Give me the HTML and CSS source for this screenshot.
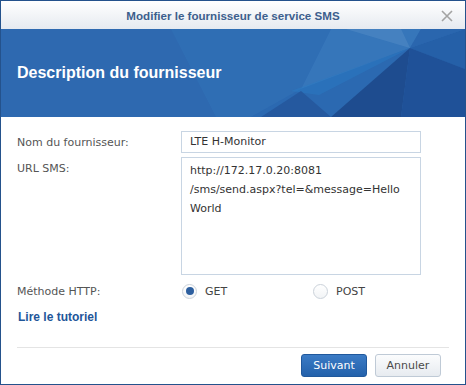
FILE: index.html
```html
<!DOCTYPE html>
<html lang="fr">
<head>
  <meta charset="UTF-8">
  <title>Modifier le fournisseur de service SMS</title>
  <link rel="stylesheet" href="styles.css">
</head>
<body>
<div class="dialog">
  <div class="titlebar">
    <span class="title">Modifier le fournisseur de service SMS</span>
    <svg class="close" width="12" height="12" viewBox="0 0 12 12">
      <path d="M1 1L11 11M11 1L1 11" stroke="#a3a3a3" stroke-width="1.6" fill="none"/>
    </svg>
  </div>

  <div class="banner">
    <svg class="banner-art" width="464" height="88" viewBox="0 0 464 88" preserveAspectRatio="none">
      <rect width="464" height="88" fill="#2e69b0"/>
      <polygon points="170,0 330,0 300,60 250,88 215,88" fill="#3170b6" opacity="0.7"/>
      <polygon points="330,0 420,0 409,19 300,60" fill="#3676ba"/>
      <polygon points="345,0 400,0 409,19" fill="#4a84c2" opacity="0.8"/>
      <polygon points="300,60 409,19 330,88 250,88" fill="#2b69b1"/>
      <polygon points="290,62 409,19 318,66" fill="#2a7cc6" opacity="0.45"/>
      <polygon points="409,19 464,0 464,40" fill="#2560a8"/>
      <polygon points="420,0 464,0 409,19" fill="#2a66ae"/>
      <polygon points="409,19 464,40 464,88 400,88" fill="#1f5198"/>
      <polygon points="409,19 400,88 330,88" fill="#1e4c8f"/>
      <polygon points="260,88 300,62 330,88" fill="#25599f"/>
    </svg>
    <h1>Description du fournisseur</h1>
  </div>

  <div class="form">
    <label class="label">Nom du fournisseur:</label>
    <div class="field">LTE H-Monitor</div>

    <label class="label top">URL SMS:</label>
    <div class="field area">http://172.17.0.20:8081<br>/sms/send.aspx?tel=&amp;message=Hello<br>World</div>

    <label class="label method">Méthode HTTP:</label>
    <div class="radios">
      <span class="option"><span class="radio checked"></span>GET</span>
      <span class="option"><span class="radio"></span>POST</span>
    </div>
  </div>

  <a class="tutorial" href="#">Lire le tutoriel</a>

  <div class="footer">
    <button class="btn primary">Suivant</button>
    <button class="btn">Annuler</button>
  </div>
</div>
</body>
</html>
```

FILE: styles.css
```css
body {
  margin: 0;
  background: #fff;
  font-family: "DejaVu Sans", Verdana, sans-serif;
  font-size: 11px;
  color: #4d4d4d;
}
.dialog {
  width: 466px;
  height: 385px;
  box-sizing: border-box;
  border: 1px solid #24528c;
  display: flex;
  flex-direction: column;
  background: #fff;
}
.titlebar {
  height: 28px;
  flex: none;
  display: flex;
  align-items: center;
  justify-content: center;
  position: relative;
  background: linear-gradient(to bottom, #ffffff, #e6eaf0);
}
.title {
  font-family: "Liberation Sans", Arial, sans-serif;
  font-weight: bold;
  font-size: 11.6px;
  color: #3d5f8d;
  margin-top: 1px;
}
.close {
  position: absolute;
  right: 12px;
  top: 9px;
}
.banner {
  height: 88px;
  flex: none;
  position: relative;
  display: flex;
  align-items: center;
  overflow: hidden;
}
.banner-art {
  position: absolute;
  left: 0;
  top: 0;
}
.banner h1 {
  position: relative;
  margin: 0 0 0 16px;
  font-family: "Liberation Sans", Arial, sans-serif;
  font-size: 16px;
  font-weight: bold;
  color: #fff;
}
.form {
  display: grid;
  grid-template-columns: 164px 240px;
  row-gap: 4px;
  padding: 14px 16px 0;
}
.label {
  display: flex;
  align-items: center;
  color: #555;
}
.label.top {
  align-items: flex-start;
  padding-top: 5px;
}
.field {
  height: 22px;
  box-sizing: border-box;
  border: 1px solid #c8d5e3;
  padding: 0 8px;
  line-height: 20px;
  color: #333;
}
.area {
  height: 118px;
  padding: 3px 8px;
  line-height: 19px;
  white-space: nowrap;
}
.method {
  margin-top: 2px;
}
.radios {
  display: flex;
  height: 20px;
  margin-top: 2px;
  align-items: center;
  color: #444;
}
.option {
  flex: none;
  width: 131px;
  display: flex;
  align-items: center;
}
.radio {
  width: 13px;
  height: 13px;
  border: 1px solid #cbd2da;
  border-radius: 50%;
  background: linear-gradient(to bottom, #fff, #f2f4f6);
  margin: 0 8px 0 1px;
  display: flex;
  align-items: center;
  justify-content: center;
}
.radio.checked::after {
  content: "";
  width: 8px;
  height: 8px;
  border-radius: 50%;
  background: #2d5f9f;
}
.tutorial {
  margin: 9px 0 0 17px;
  font-family: "Liberation Sans", Arial, sans-serif;
  font-size: 12px;
  font-weight: bold;
  color: #1f5699;
  text-decoration: none;
  align-self: flex-start;
}
.footer {
  margin: auto 16px 0;
  border-top: 1px solid #e4e4e4;
  padding: 6px 8px 7px 0;
  display: flex;
  justify-content: flex-end;
  gap: 8px;
}
.btn {
  width: 66px;
  height: 23px;
  font-family: "DejaVu Sans", Verdana, sans-serif;
  font-size: 11px;
  border-radius: 3px;
  border: 1px solid #bfcad6;
  background: linear-gradient(to bottom, #fbfcfd, #e7ebf0);
  color: #4a4a4a;
  padding: 0;
}
.btn.primary {
  border-color: #20589c;
  background: linear-gradient(to bottom, #3b7bc5, #2361ab);
  color: #fff;
}
```
